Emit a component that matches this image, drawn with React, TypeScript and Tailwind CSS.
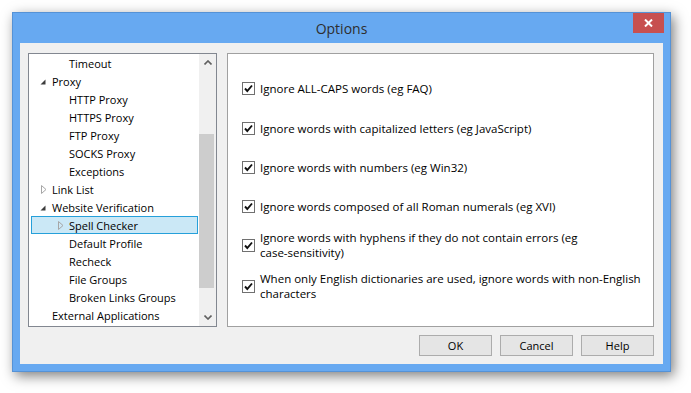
import React from "react";

/* ---------------- TREE ---------------- */

type Node = { label: string; depth: 1 | 2; expander?: "open" | "closed"; selected?: boolean };

const nodes: Node[] = [
  { label: "Timeout", depth: 2 },
  { label: "Proxy", depth: 1, expander: "open" },
  { label: "HTTP Proxy", depth: 2 },
  { label: "HTTPS Proxy", depth: 2 },
  { label: "FTP Proxy", depth: 2 },
  { label: "SOCKS Proxy", depth: 2 },
  { label: "Exceptions", depth: 2 },
  { label: "Link List", depth: 1, expander: "closed" },
  { label: "Website Verification", depth: 1, expander: "open" },
  { label: "Spell Checker", depth: 2, expander: "closed", selected: true },
  { label: "Default Profile", depth: 2 },
  { label: "Recheck", depth: 2 },
  { label: "File Groups", depth: 2 },
  { label: "Broken Links Groups", depth: 2 },
  { label: "External Applications", depth: 1 },
];

function Expander({ kind }: { kind?: "open" | "closed" }) {
  if (kind === "open") {
    return (
      <svg width="6" height="6" viewBox="0 0 6 6" className="ml-[4px] mt-[2px]">
        <polygon points="5.5,0.5 5.5,5.5 0.5,5.5" fill="#3c3c3c" />
      </svg>
    );
  }
  if (kind === "closed") {
    return (
      <svg width="6" height="9" viewBox="0 0 6 9" className="ml-[5px] mt-[1px]">
        <polygon points="0.5,0.5 5,4.5 0.5,8.5" fill="none" stroke="#a6a6a6" />
      </svg>
    );
  }
  return null;
}

function TreeRow({ node }: { node: Node }) {
  const pad = node.depth === 1 ? "pl-[4px]" : "pl-[21px]";
  const sel = node.selected
    ? "bg-[#cbe8f6] border-[#26a0da]"
    : "border-transparent";
  return (
    <div className={`h-[18px] ml-[2px] mr-px flex items-center border ${sel} ${pad}`}>
      <div className="w-[16px] h-full flex items-center">
        <Expander kind={node.expander} />
      </div>
      <span className="whitespace-nowrap leading-none">{node.label}</span>
    </div>
  );
}

function Chevron({ up }: { up?: boolean }) {
  return (
    <svg width="8" height="5" viewBox="0 0 8 5">
      <polyline
        points={up ? "0.5,4.5 4,1 7.5,4.5" : "0.5,0.5 4,4 7.5,0.5"}
        fill="none"
        stroke="#606060"
        strokeWidth="1.6"
      />
    </svg>
  );
}

function Tree() {
  return (
    <div className="w-[189px] h-full border border-[#828790] bg-white flex">
      <div className="flex-1 flex flex-col">
        {nodes.map((n) => (
          <TreeRow key={n.label} node={n} />
        ))}
      </div>
      <div className="w-[17px] bg-[#f0f0f0] flex flex-col">
        <div className="h-[17px] flex items-center justify-center">
          <Chevron up />
        </div>
        <div className="h-[63px]" />
        <div className="h-[154px] bg-[#cdcdcd] mr-[2px]" />
        <div className="flex-1" />
        <div className="h-[17px] flex items-center justify-center">
          <Chevron />
        </div>
      </div>
    </div>
  );
}

/* ---------------- CHECKBOXES ---------------- */

function CheckBox() {
  return (
    <div className="w-[13px] h-[13px] shrink-0 border border-[#707070] bg-white flex items-center justify-center">
      <svg width="11" height="11" viewBox="0 0 11 11">
        <polyline points="2,5.5 4.3,8 9,2.5" fill="none" stroke="#111" strokeWidth="1.9" />
      </svg>
    </div>
  );
}

const options: { h: string; lines: string[] }[] = [
  { h: "h-[40px]", lines: ["Ignore ALL-CAPS words (eg FAQ)"] },
  { h: "h-[40px]", lines: ["Ignore words with capitalized letters (eg JavaScript)"] },
  { h: "h-[39px]", lines: ["Ignore words with numbers (eg Win32)"] },
  { h: "h-[38px]", lines: ["Ignore words composed of all Roman numerals (eg XVI)"] },
  { h: "h-[40px]", lines: ["Ignore words with hyphens if they do not contain errors (eg", "case-sensitivity)"] },
  { h: "h-[42px]", lines: ["When only English dictionaries are used, ignore words with non-English", "characters"] },
];

function OptionsPanel() {
  return (
    <div className="flex-1 h-full border border-[#a0a0a0] bg-white pt-[14px] pl-[14px] flex flex-col text-[11.5px]">
      {options.map((o) => (
        <div key={o.lines[0]} className={`${o.h} flex items-center gap-[5px]`}>
          <CheckBox />
          <div className="leading-[15px]">
            {o.lines.map((l) => (
              <div key={l} className="whitespace-nowrap">
                {l}
              </div>
            ))}
          </div>
        </div>
      ))}
    </div>
  );
}

function DlgButton({ label }: { label: string }) {
  return (
    <button className="w-[73px] h-[21px] border border-[#acacac] bg-[#e5e5e5] text-black leading-none">
      {label}
    </button>
  );
}

/* ---------------- WINDOW ---------------- */

export default function App() {
  return (
    <div
      className="w-[691px] h-[393px] bg-white pt-[12px] pl-[12px] text-[11px] text-black"
      style={{ fontFamily: '"Open Sans", "Noto Sans", sans-serif' }}
    >
      <div className="w-[659px] h-[360px] bg-[#67a9f1] border border-[#5592d6] shadow-[3px_4px_12px_rgba(0,0,0,0.5)] flex flex-col">
        {/* title bar */}
        <div className="h-[30px] flex items-start relative">
          <div className="flex-1 h-full flex items-center justify-center text-[14px] text-[#2e2e2e]">
            Options
          </div>
          <div className="absolute right-[6px] top-0 w-[31px] h-[20px] bg-[#c75050] flex items-center justify-center">
            <svg width="9" height="8" viewBox="0 0 9 8">
              <path d="M1 0.5 L8 7.5 M8 0.5 L1 7.5" stroke="white" strokeWidth="2" />
            </svg>
          </div>
        </div>

        {/* client area */}
        <div className="mx-[7px] h-[321px] bg-[#f0f0f0] pt-[10px] pl-[8px] pr-[9px] pb-[8px] flex flex-col">
          <div className="h-[274px] flex gap-[10px]">
            <Tree />
            <OptionsPanel />
          </div>
          <div className="mt-[8px] flex justify-end gap-[8px]">
            <DlgButton label="OK" />
            <DlgButton label="Cancel" />
            <DlgButton label="Help" />
          </div>
        </div>
      </div>
    </div>
  );
}
